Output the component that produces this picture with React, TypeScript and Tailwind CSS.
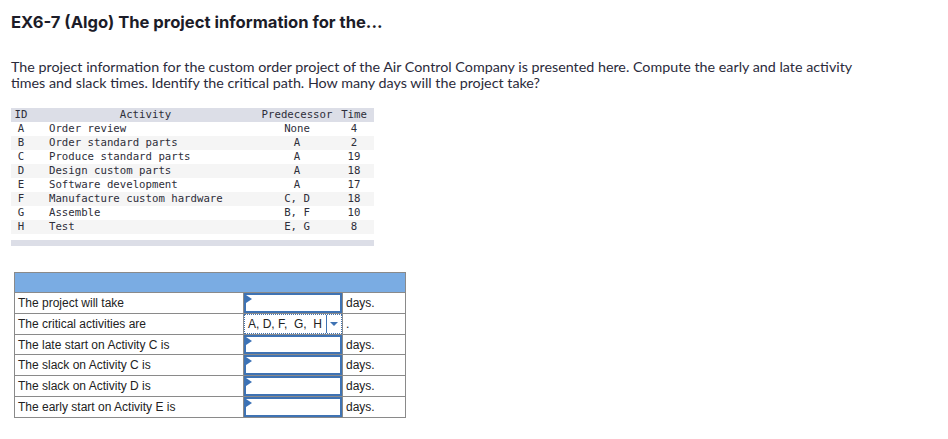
import React from "react";

const activities = [
  { id: "A", name: "Order review", pred: "None", time: "4" },
  { id: "B", name: "Order standard parts", pred: "A", time: "2" },
  { id: "C", name: "Produce standard parts", pred: "A", time: "19" },
  { id: "D", name: "Design custom parts", pred: "A", time: "18" },
  { id: "E", name: "Software development", pred: "A", time: "17" },
  { id: "F", name: "Manufacture custom hardware", pred: "C, D", time: "18" },
  { id: "G", name: "Assemble", pred: "B, F", time: "10" },
  { id: "H", name: "Test", pred: "E, G", time: "8" },
];

const answers = [
  { label: "The project will take", kind: "input", unit: "days.", h: "h-[21px]" },
  { label: "The critical activities are", kind: "select", unit: ".", h: "h-[21px]" },
  { label: "The late start on Activity C is", kind: "input", unit: "days.", h: "h-[20px]" },
  { label: "The slack on Activity C is", kind: "input", unit: "days.", h: "h-[21px]" },
  { label: "The slack on Activity D is", kind: "input", unit: "days.", h: "h-[21px]" },
  { label: "The early start on Activity E is", kind: "input", unit: "days.", h: "h-[20px]" },
];

function Flag() {
  return (
    <span className="absolute left-0 top-0 w-0 h-0 border-t-[4px] border-b-[4px] border-l-[6px] border-t-transparent border-b-transparent border-l-[#3b72b6]" />
  );
}

export default function App() {
  return (
    <div className="w-[948px] h-[439px] bg-white px-[11px] pt-[11px] text-[#1f1f2e]">
      <h1 className="font-['Inter',sans-serif] font-bold text-[16.6px] leading-[22px] text-[#1c1c28]">
        EX6-7 (Algo) The project information for the...
      </h1>

      <p className="mt-[26px] font-['Lato',sans-serif] text-[14.3px] leading-[16px] text-[#2b2b3b]">
        The project information for the custom order project of the Air Control Company is presented here. Compute the early and late activity
        <br />
        times and slack times. Identify the critical path. How many days will the project take?
      </p>

      <div className="mt-[17px] w-[363px] font-['DejaVu_Sans_Mono',monospace] text-[10.7px] leading-[14px] text-[#2e2e3a]">
        <div className="grid grid-cols-[20px_229px_74px_40px] bg-[#dcdee7]">
          <div className="text-center">ID</div>
          <div className="text-center">Activity</div>
          <div className="text-center">Predecessor</div>
          <div className="text-center">Time</div>
        </div>
        {activities.map((a, i) => (
          <div
            key={a.id}
            className={`grid grid-cols-[20px_229px_74px_40px] ${i % 2 === 1 ? "bg-[#f5f5f5]" : "bg-white"}`}
          >
            <div className="text-center">{a.id}</div>
            <div className="pl-[18px] whitespace-pre">{a.name}</div>
            <div className="text-center whitespace-pre">{a.pred}</div>
            <div className="text-center">{a.time}</div>
          </div>
        ))}
        <div className="mt-[6px] h-[6px] bg-[#dcdee7]" />
      </div>

      <div className="mt-[26px] ml-[3px] w-[392px] border border-[#8a8a8a] font-['Liberation_Sans',Arial,sans-serif] text-[12px] text-[#222]">
        <div className="h-[20px] bg-[#7aace3] border-b border-[#8a8a8a]" />
        {answers.map((r, i) => (
          <div
            key={r.label}
            className={`grid grid-cols-[229px_99px_1fr] ${r.h} ${i < answers.length - 1 ? "border-b border-[#8a8a8a]" : ""}`}
          >
            <div className="border-r border-[#8a8a8a] pl-[3px] flex items-center">{r.label}</div>
            <div className="border-r border-[#8a8a8a] relative">
              {r.kind === "input" ? (
                <div className="absolute inset-0 border-2 border-[#3f73b3]">
                  <Flag />
                </div>
              ) : (
                <div className="absolute inset-0 border border-dotted border-[#3f73b3] flex items-center">
                  <span className="flex-1 pl-[3px] whitespace-pre">A, D, F,  G,  H</span>
                  <span className="w-[15px] h-full border-l border-[#3f73b3] flex items-center justify-center">
                    <span className="w-0 h-0 border-l-[4px] border-r-[4px] border-t-[4px] border-l-transparent border-r-transparent border-t-[#3f73b3]" />
                  </span>
                </div>
              )}
            </div>
            <div className="pl-[3px] flex items-center">{r.unit}</div>
          </div>
        ))}
      </div>
    </div>
  );
}
